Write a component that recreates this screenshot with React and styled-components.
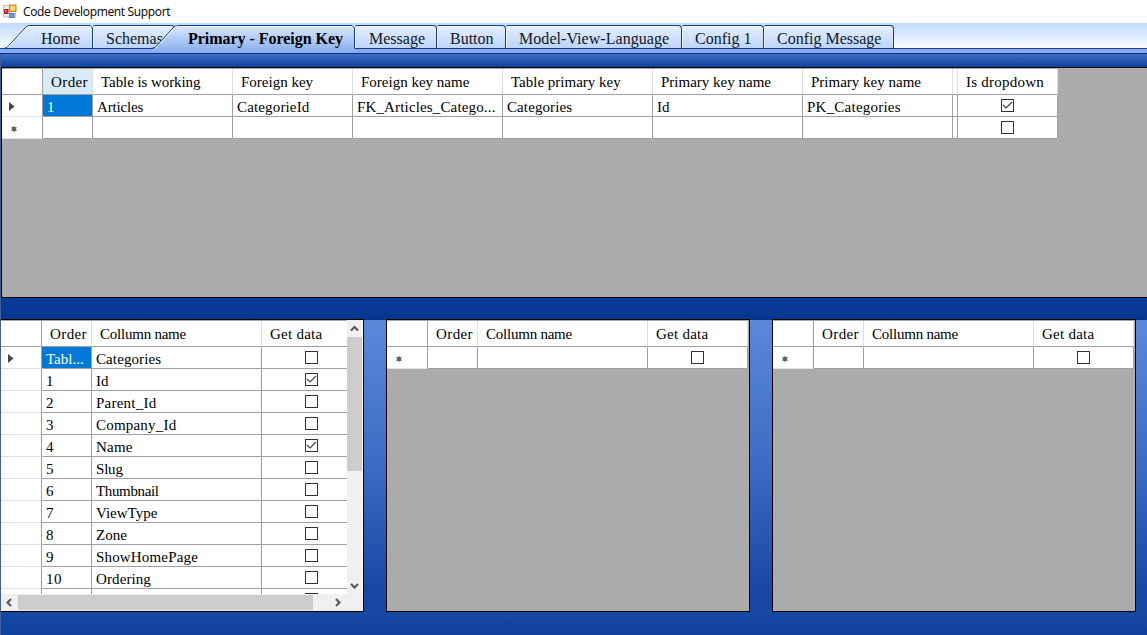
import React from "react";
import styled, { createGlobalStyle, css } from "styled-components";

const Global = createGlobalStyle`
  * { box-sizing: border-box; }
  body { margin: 0; overflow: hidden; font-family: "Liberation Serif", "Times New Roman", serif; color: #000; }
`;

const Window = styled.div`
  width: 1147px;
  height: 635px;
  display: flex;
  flex-direction: column;
  overflow: hidden;
  background: #fff;
`;

const TitleBar = styled.header`
  height: 23px;
  flex: none;
  display: flex;
  align-items: center;
  gap: 6px;
  padding-left: 3px;
  background: #fff;
  font: 12px "Open Sans", "Noto Sans", sans-serif;
`;

const Title = styled.span`
  line-height: 22px;
  white-space: nowrap;
  padding-top: 1px;
  letter-spacing: -0.34px;
`;

const TabStrip = styled.nav`
  height: 31px;
  flex: none;
  display: flex;
  align-items: flex-start;
  padding-top: 2px;
  background: linear-gradient(#c0d9ff 0, #fbfdff 25px);
  border-bottom: 1px solid #0b2f86;
  box-shadow: inset 0 -4px 0 #86acec, inset 0 -5px 0 #1c4291;
`;

const Tab = styled.button`
  position: relative;
  z-index: 0;
  flex: none;
  width: ${(p) => p.$w}px;
  height: 24px;
  padding: 4px 0 0 ${(p) => p.$pad}px;
  border: 0;
  text-align: left;
  white-space: nowrap;
  background: none;
  color: #101828;
  font: ${(p) => (p.$active ? "bold " : "")}16px/20px "Liberation Serif", serif;
  ${(p) =>
    !p.$slant &&
    css`
      background: linear-gradient(#e6effd, #bcd5fa);
      border: 1px solid #123c92;
      border-width: 1px 1px 1px 0;
      border-radius: 2px 4px 0 0;
      box-shadow: inset 1px 1px 0 #f4f9ff;
      padding-top: 3px;
    `}
  ${(p) => p.$slant && "display: flex; align-items: flex-start;"}
  ${(p) => p.$active && "z-index: 2; height: 28px; color: #000;"}
`;

const TabShape = styled.svg`
  position: absolute;
  left: ${(p) => p.$left}px;
  top: 0;
  z-index: -1;
`;

const TabText = styled.span`
  letter-spacing: ${(p) => p.$track || 0}px;
`;

const Page = styled.main`
  flex: 1;
  min-height: 0;
  display: flex;
  flex-direction: column;
  border-left: 1px solid #3f5f96;
`;

const TopBand = styled.div`
  height: 13px;
  flex: none;
  background: linear-gradient(#3f70c6, #0f409c);
`;

const MiddleBand = styled.div`
  height: 21px;
  flex: none;
  background: linear-gradient(#0a3b9a, #06378f);
`;

const BottomBand = styled.div`
  flex: 1;
  background: linear-gradient(#1648a4, #0e409c);
`;

const Columns = styled.section`
  height: 293px;
  flex: none;
  display: flex;
  gap: 22px;
  background: linear-gradient(#06378f 1px, #5a89da 1px, #3f6fc6 45%, #1547a3 94%);
`;

const Grid = styled.div`
  flex: none;
  width: ${(p) => p.$w}px;
  height: ${(p) => p.$h}px;
  display: flex;
  flex-direction: column;
  align-items: flex-start;
  border: 1px solid #000;
  ${(p) => p.$flush && "border-left: 0;"}
  background: #ababab;
  overflow: hidden;
`;

const GridTop = styled.div`
  display: flex;
  width: 100%;
  height: ${(p) => p.$h}px;
  background: #fff;
`;

const Table = styled.div`
  flex: none;
  border-top: 1px solid #a8a8a8;
  overflow: hidden;
  width: ${(p) => (p.$w ? p.$w + "px" : "auto")};
`;

const Row = styled.div`
  display: flex;
  height: ${(p) => (p.$head ? 26 : 22)}px;
`;

const Cell = styled.div`
  flex: none;
  width: ${(p) => p.$w}px;
  height: 100%;
  padding: ${(p) => (p.$w < 10 ? "0" : p.$head ? "4px 0 0 8px" : "3px 0 0 4px")};
  border-right: 1px solid ${(p) => (p.$head && !p.$first ? "#dedede" : "#a0a0a0")};
  border-bottom: 1px solid ${(p) => (p.$first && !p.$head ? "#e2e2e2" : "#a0a0a0")};
  background: ${(p) => (p.$selected ? "#0078d7" : p.$hot ? "#d9ebf9" : "#fff")};
  color: ${(p) => (p.$selected ? "#fff" : "#000")};
  font-size: 15px;
  line-height: 19px;
  white-space: nowrap;
  overflow: hidden;
  letter-spacing: ${(p) => p.$track || 0}px;
`;

const CheckCell = styled(Cell)`
  padding: 0;
`;

const RowMark = styled.svg`
  display: block;
  margin: 1px 0 0 -1px;
`;

const Box = styled.svg`
  display: block;
  margin: 1px auto 0;
`;

const VScroll = styled.div`
  width: 15px;
  height: 274px;
  padding-top: 1px;
  display: flex;
  flex-direction: column;
  background: #f0f0f0;
`;

const HScroll = styled.div`
  width: 362px;
  height: 17px;
  padding: 1px 0;
  display: flex;
  background: #f0f0f0;
`;

const VThumb = styled.div`
  flex: none;
  height: 134px;
  background: #cdcdcd;
`;

const HThumb = styled.div`
  width: 295px;
  background: #cdcdcd;
`;

const Arrow = styled.svg`
  flex: none;
  display: block;
  margin-top: ${(p) => p.$mt || 0}px;
  margin-left: ${(p) => p.$ml || 0}px;
`;

function AppIcon() {
  return (
    <svg width="14" height="15" viewBox="0 0 14 15">
      <rect x="0.5" y="1.500" width="12" height="11.500" fill="#eceae6" stroke="#c4c4c4" />
      <rect x="6.500" y="1" width="6.500" height="6.500" fill="#f7c64a" stroke="#c98a1c" />
      <rect x="8" y="2.500" width="3.500" height="3" fill="#fde08a" />
      <rect x="1" y="5" width="4.500" height="5" fill="#a5222b" />
      <rect x="2" y="6" width="2" height="2.500" fill="#e06a62" />
      <rect x="6.500" y="9.500" width="4.500" height="4" fill="#6f9be8" stroke="#4f7cc9" />
    </svg>
  );
}

function Check({ on }) {
  return (
    <Box width="13" height="19" viewBox="0 0 13 19">
      <rect x="0.5" y="3.500" width="12" height="12" fill="#fff" stroke="#333" />
      {on && <path d="M2 9 L5 12 L11 6" fill="none" stroke="#444" strokeWidth="1.200" />}
    </Box>
  );
}

function Mark({ kind }) {
  return (
    <RowMark width="14" height="16" viewBox="0 0 14 16">
      {kind === "current" && <path d="M4 3 L9.500 7.500 L4 12 Z" fill="#444" />}
      {kind === "new" && (
        <g stroke="#666" strokeWidth="1">
          <circle cx="9" cy="8" r="2.300" fill="#555" stroke="none" />
          <path d="M9 5.200V10.800M6.400 6.500L11.600 9.500M6.400 9.500L11.600 6.500" />
        </g>
      )}
    </RowMark>
  );
}

function DataGrid({ columns, rows, width }) {
  return (
    <Table $w={width}>
      <Row $head>
        <Cell $head $first $w={columns[0].w} />
        {columns.slice(1).map((c, i) => (
          <Cell key={i} $head $w={c.w} $hot={c.hot} $track={c.track}>
            {c.label}
          </Cell>
        ))}
      </Row>
      {rows.map((r, ri) => (
        <Row key={ri}>
          <Cell $first $w={columns[0].w}>
            <Mark kind={r.mark} />
          </Cell>
          {columns.slice(1).map((c, i) =>
            c.check ? (
              <CheckCell key={i} $w={c.w}>
                <Check on={r.on} />
              </CheckCell>
            ) : (
              <Cell key={i} $w={c.w} $selected={i === 0 && r.selected} $track={(r.tracks || [])[i]}>
                {(r.cells || [])[i]}
              </Cell>
            )
          )}
        </Row>
      ))}
    </Table>
  );
}

const keyColumns = [
  { w: 41 },
  { w: 50, label: "Order", hot: true, track: 0.4 },
  { w: 140, label: "Table is working", track: -0.07 },
  { w: 120, label: "Foreign key" },
  { w: 150, label: "Foreign key name" },
  { w: 150, label: "Table primary key" },
  { w: 150, label: "Primary key name" },
  { w: 150, label: "Primary key name" },
  { w: 5 },
  { w: 100, label: "Is dropdown", track: 0.23, check: true },
];

const keyRows = [
  {
    mark: "current",
    selected: true,
    on: true,
    cells: ["1", "Articles", "CategorieId", "FK_Articles_Catego...", "Categories", "Id", "PK_Categories"],
    tracks: [0, -0.15, 0.15, 0.15, 0.1, 0, 0.23],
  },
  { mark: "new" },
];

const fieldColumns = [
  { w: 41 },
  { w: 50, label: "Order", track: 0.4 },
  { w: 170, label: "Collumn name", track: -0.23 },
  { w: 100, label: "Get data", track: 0.25, check: true },
];

const fieldRows = [
  { mark: "current", selected: true, cells: ["Tabl...", "Categories"], tracks: [0, 0.1] },
  { cells: ["1", "Id"], on: true },
  { cells: ["2", "Parent_Id"], tracks: [0, 0.23] },
  { cells: ["3", "Company_Id"], tracks: [0, 0.2] },
  { cells: ["4", "Name"], on: true, tracks: [0, 0.2] },
  { cells: ["5", "Slug"], tracks: [0, -0.2] },
  { cells: ["6", "Thumbnail"], tracks: [0, -0.35] },
  { cells: ["7", "ViewType"] },
  { cells: ["8", "Zone"] },
  { cells: ["9", "ShowHomePage"], tracks: [0, 0.17] },
  { cells: ["10", "Ordering"], tracks: [0.4, 0.1] },
  { cells: [] },
];

export default function App() {
  return (
    <Window>
      <Global />
      <TitleBar>
        <AppIcon />
        <Title>Code Development Support</Title>
      </TitleBar>
      <TabStrip>
        <Tab $slant $w={93} $pad={41}>
          <TabShape $left={0} width="93" height="24" viewBox="0 0 93 24">
            <defs>
              <linearGradient id="tab" x1="0" y1="0" x2="0" y2="1">
                <stop offset="0" stopColor="#e6effd" />
                <stop offset="1" stopColor="#bcd5fa" />
              </linearGradient>
            </defs>
            <path d="M4 23.500 L7 22.500 L25 3 Q27 .5 30 .5 H90 L92.500 3 V23.500 Z" fill="url(#tab)" stroke="#123c92" />
            <path d="M7.500 23 L26 3.500 Q28 1.500 30 1.500 H90" fill="none" stroke="#f4f9ff" />
          </TabShape>
          <TabText>Home</TabText>
        </Tab>
        <Tab $w={82} $pad={13}>
          <TabText>Schemas</TabText>
        </Tab>
        <Tab $slant $active $w={180} $pad={13}>
          <TabShape $left={-24} width="204" height="28" viewBox="0 0 204 28">
            <defs>
              <linearGradient id="activeTab" x1="0" y1="0" x2="0" y2="1">
                <stop offset="0" stopColor="#dbe8fc" />
                <stop offset="1" stopColor="#86acec" />
              </linearGradient>
            </defs>
            <path d="M0 28 V24 L4 23 L22 3 Q24 .5 28 .5 H201 L203.500 3 V28 Z" fill="url(#activeTab)" />
            <path d="M0 23.500 L4 22.500 L22 3 Q24 .5 28 .5 H201 L203.500 3 V23" fill="none" stroke="#123c92" />
            <path d="M4.500 23.500 L23 3.500 Q25 1.500 28 1.500 H201" fill="none" stroke="#f4f9ff" />
          </TabShape>
          <TabText $track={-0.03}>Primary - Foreign Key</TabText>
        </Tab>
        <Tab $w={82} $pad={14}><TabText>Message</TabText></Tab>
        <Tab $w={69} $pad={13}><TabText>Button</TabText></Tab>
        <Tab $w={176} $pad={13}><TabText $track={0.05}>Model-View-Language</TabText></Tab>
        <Tab $w={82} $pad={13}><TabText>Config 1</TabText></Tab>
        <Tab $w={130} $pad={13}><TabText>Config Message</TabText></Tab>
      </TabStrip>
      <Page>
        <TopBand />
        <Grid $w={1160} $h={231}>
          <DataGrid columns={keyColumns} rows={keyRows} />
        </Grid>
        <MiddleBand />
        <Columns>
          <Grid $w={363} $h={293} $flush>
            <GridTop $h={274}>
              <DataGrid columns={fieldColumns} rows={fieldRows} width={346} />
              <VScroll>
                <Arrow width="15" height="16" viewBox="0 0 15 16">
                  <path d="M4 9.500 L7.500 6 L11 9.500" fill="none" stroke="#555" strokeWidth="2" />
                </Arrow>
                <VThumb />
                <Arrow $mt={107} width="15" height="16" viewBox="0 0 15 16">
                  <path d="M4 6 L7.500 9.500 L11 6" fill="none" stroke="#555" strokeWidth="2" />
                </Arrow>
              </VScroll>
            </GridTop>
            <HScroll>
              <Arrow width="17" height="15" viewBox="0 0 17 15">
                <path d="M10 4 L6.500 7.500 L10 11" fill="none" stroke="#555" strokeWidth="2" />
              </Arrow>
              <HThumb />
              <Arrow $ml={16} width="17" height="15" viewBox="0 0 17 15">
                <path d="M7 4 L10.500 7.500 L7 11" fill="none" stroke="#555" strokeWidth="2" />
              </Arrow>
            </HScroll>
          </Grid>
          <Grid $w={364} $h={293}>
            <DataGrid columns={fieldColumns} rows={[{ mark: "new" }]} />
          </Grid>
          <Grid $w={364} $h={293}>
            <DataGrid columns={fieldColumns} rows={[{ mark: "new" }]} />
          </Grid>
        </Columns>
        <BottomBand />
      </Page>
    </Window>
  );
}
